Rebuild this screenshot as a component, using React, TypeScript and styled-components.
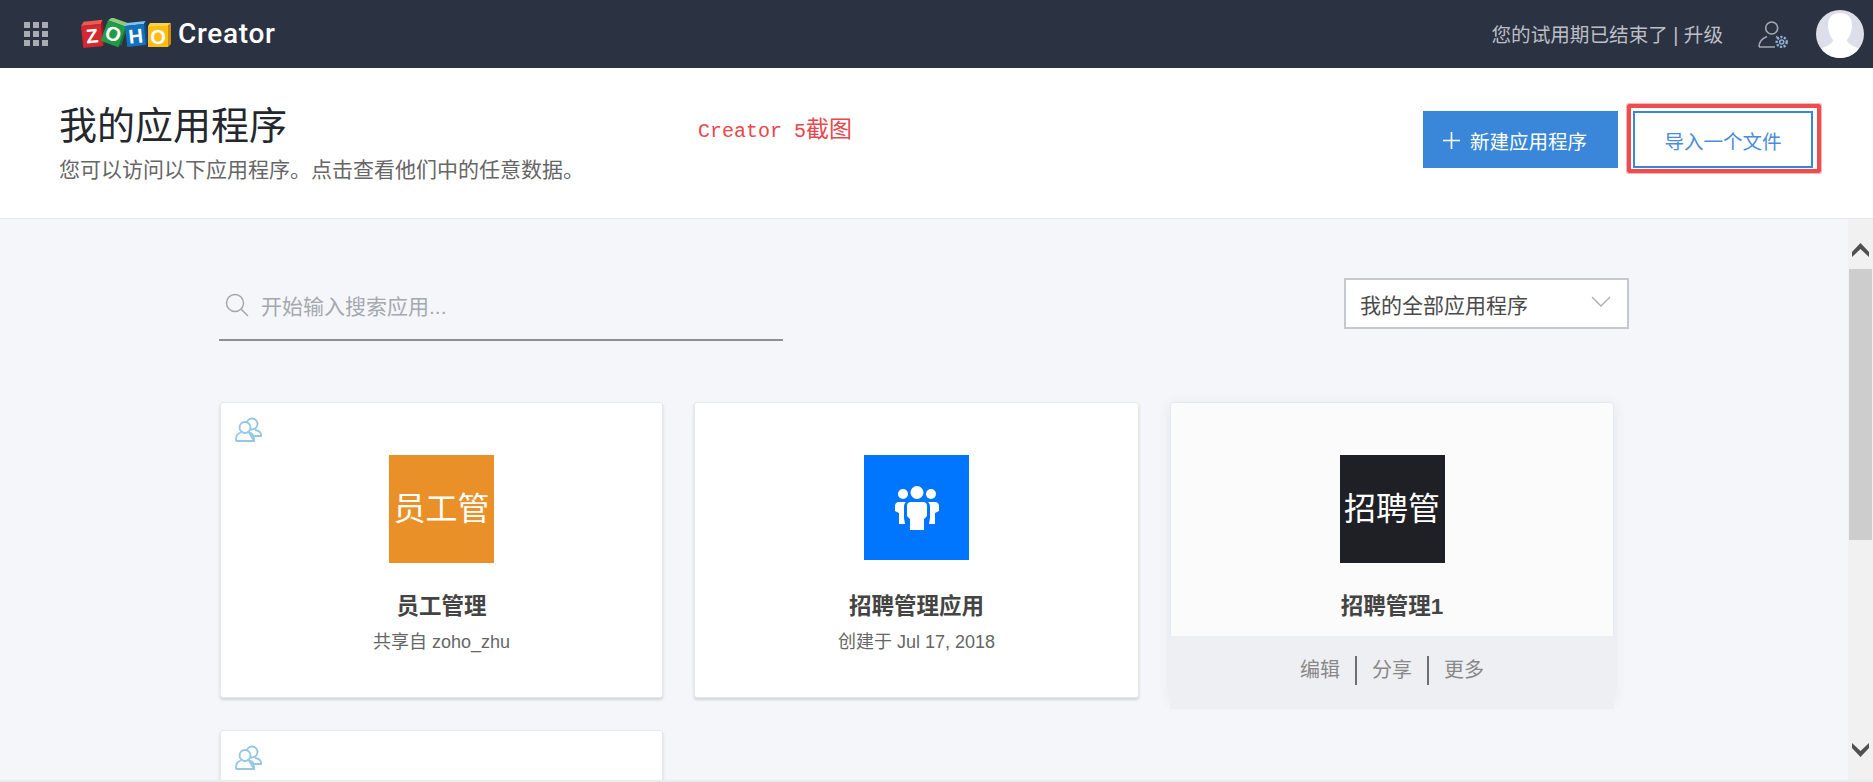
import React from "react";
import styled, { createGlobalStyle } from "styled-components";

const CJK = `"Liberation Sans", "Noto Sans CJK SC", sans-serif`;

const Global = createGlobalStyle`
  html, body { margin: 0; padding: 0; height: 100%; overflow: hidden; background: #f4f6fa; }
  * { box-sizing: border-box; }
  body { font-family: ${CJK}; }
`;

const Page = styled.div`
  width: 1873px; height: 782px; display: flex; flex-direction: column; overflow: hidden;
`;
const Header = styled.header`
  height: 68px; flex: none; background: #2b3242; display: flex; align-items: center; padding: 0 9px 0 24px;
`;
const Waffle = styled.div`
  display: grid; grid-template-columns: repeat(3, 6px); grid-auto-rows: 6px; gap: 3px; margin-right: 33px;
  i { background: #a9abb3; display: block; }
`;
const Brand = styled.div`
  display: flex; align-items: center; gap: 7px; flex: 1;
`;
const BrandName = styled.span`
  font-family: Roboto, sans-serif; font-weight: 500; font-size: 28px; letter-spacing: 0.7px; color: #fff; line-height: 1;
`;
const Trial = styled.span`
  font-size: 19.6px; color: #bcbfc6; margin-right: 35px; padding-bottom: 2px; white-space: pre;
`;
const UserGear = styled.svg`
  width: 30px; height: 28px; margin-right: 28px; display: block;
`;
const Avatar = styled.svg`
  width: 48px; height: 48px; display: block;
`;

const TopBar = styled.section`
  height: 151px; flex: none; background: #fff; border-bottom: 1px solid #e7e8eb; display: flex; align-items: flex-start; padding: 0 60px 0 59px; position: relative;
`;
const TitleBlock = styled.div`
  display: flex; flex-direction: column; padding-top: 35px; width: 639px; flex: none;
`;
const Title = styled.h1`
  margin: 0; font-weight: 400; font-size: 38px; line-height: 46px; color: #24272e;
`;
const Subtitle = styled.p`
  margin: 6px 0 0; font-size: 21px; line-height: 30px; color: #666;
`;
const Note = styled.span`
  margin-top: 47px; font-family: "Liberation Mono", "Noto Sans CJK SC", monospace; font-size: 20px; line-height: 32px; color: #e8474c; white-space: pre;
`;
const NoteCjk = styled.span`
  font-size: 23px;
`;
const Actions = styled.div`
  margin-left: auto; margin-top: 43px; display: flex; gap: 15px;
`;
const Button = styled.button<{ $primary?: boolean }>`
  height: 57px; padding: 2px 0 0; display: flex; align-items: center; gap: 10px;
  font-family: ${CJK}; font-size: 19.5px; cursor: pointer;
  justify-content: ${(p) => (p.$primary ? "flex-start" : "center")};
  padding-left: ${(p) => (p.$primary ? "18px" : "0")};
  width: ${(p) => (p.$primary ? "195px" : "180px")};
  background: ${(p) => (p.$primary ? "#3a87d9" : "#fff")};
  color: ${(p) => (p.$primary ? "#fff" : "#4a8cd8")};
  border: 2px solid #3a87d9;
  position: relative;
`;
const RedMark = styled.span`
  position: absolute; left: -8px; right: -10px; top: -9px; bottom: -7px;
  border: 4px solid #ee4c4f; border-radius: 2px; pointer-events: none;
  box-shadow: 0 0 0 1px rgba(238, 76, 79, 0.4);
`;

const Body = styled.div`
  flex: 1; min-height: 0; display: flex; border-bottom: 2px solid #ebecef;
`;
const Content = styled.main`
  flex: 1; min-width: 0; padding: 59px 0 0 219px; overflow: hidden;
`;
const Filters = styled.div`
  display: flex; justify-content: space-between; align-items: flex-start; width: 1410px; height: 124px;
`;
const Search = styled.div`
  width: 564px; height: 63px; border-bottom: 2px solid #8f8f8f; display: flex; align-items: center; gap: 12px; padding: 0 0 7px 6px;
`;
const SearchIcon = styled.svg`
  width: 24px; height: 24px; flex: none; display: block;
`;
const SearchText = styled.span`
  font-size: 21px; color: #a5a8ae;
`;
const Select = styled.div`
  width: 285px; height: 51px; background: #fff; border: 2px solid #c5c8cf; display: flex; align-items: center; justify-content: space-between; padding: 0 16px 0 14px;
  font-size: 21px; color: #4a4a4a;
`;
const Chevron = styled.svg`
  width: 20px; height: 11px; display: block; margin-top: -4px;
`;
const Grid = styled.div`
  display: grid; grid-template-columns: 443px 445px 444px; gap: 32px 31px; margin-left: 1px;
`;
const Card = styled.article<{ $active?: boolean }>`
  height: 296px; position: relative; border-radius: 3px; display: flex; flex-direction: column; align-items: center; padding-top: 52px;
  background: ${(p) => (p.$active ? "#fbfbfb" : "#fff")};
  border: 1px solid #e6e7ea;
  box-shadow: ${(p) => (p.$active ? "0 3px 14px rgba(40,50,70,.09)" : "0 2px 3px rgba(0,0,0,.14)")};
`;
const AppIcon = styled.div<{ $bg: string; $tall?: boolean }>`
  width: 105px; height: ${(p) => (p.$tall ? "108px" : "105px")}; margin-bottom: ${(p) => (p.$tall ? "0" : "3px")};
  padding-bottom: ${(p) => (p.$tall ? "6px" : "0")};
  background: ${(p) => p.$bg}; color: #fff; font-size: 32px; display: flex; align-items: center; justify-content: center; white-space: nowrap;
`;
const CardTitle = styled.h2`
  margin: 30px 0 0; font-size: 22.500px; line-height: 28px; font-weight: 700; color: #444;
`;
const CardSub = styled.p`
  margin: 9px 0 0; font-size: 18px; line-height: 24px; color: #666;
`;
const SharedIcon = styled.svg`
  position: absolute; left: 14px; top: 14px; width: 27px; height: 25px;
`;
const HoverBar = styled.div`
  position: absolute; left: -1px; right: -1px; bottom: -12px; height: 73px; background: #eeeff3; display: flex; justify-content: center; padding-top: 20px;
`;
const HoverAction = styled.span<{ $divided?: boolean }>`
  height: 29px; font-size: 20px; line-height: 29px; color: #888; padding: 0 15px;
  border-left: ${(p) => (p.$divided ? "2px solid #6f6f6f" : "none")};
`;

const Scrollbar = styled.div`
  width: 25px; flex: none; background: #f1f1f1; display: flex; flex-direction: column; align-items: center; padding-top: 24px;
`;
const ScrollArrow = styled.svg`
  width: 17px; height: 14px; flex: none; display: block;
`;
const ScrollThumb = styled.div`
  width: 23px; height: 271px; margin-top: 12px; background: #cdcdcd;
`;
const ScrollEnd = styled.div`
  margin-top: auto; margin-bottom: 23px; display: flex;
`;

const letter = { fontFamily: "Liberation Sans", fontWeight: 700, fill: "#fff", textAnchor: "middle" as const };

const Logo = () => (
  <svg width="90" height="32" viewBox="0 0 90 32" style={{ display: "block" }}>
    <g transform="rotate(-6 11 17)">
      <polygon points="1,7 4,3 23,3 21,7" fill="#ef5a50" />
      <polygon points="21,7 23,3 23,25 21,29" fill="#9c1a22" />
      <rect x="1" y="7" width="20" height="22" fill="#d42730" />
      <text x="11" y="25" fontSize="20" {...letter}>Z</text>
    </g>
    <g transform="rotate(20 33 15)">
      <polygon points="23,5 26,1 44,1 42,5" fill="#8ccb82" />
      <polygon points="42,5 44,1 44,23 42,27" fill="#1f6e33" />
      <rect x="23" y="5" width="19" height="22" fill="#239a48" />
      <text x="32.500" y="23" fontSize="20" {...letter}>O</text>
    </g>
    <g transform="rotate(-6 55 17)">
      <polygon points="45,7 47,4 66,4 64,7" fill="#7ec4ea" />
      <polygon points="64,7 66,4 66,25 64,28" fill="#0c4f8c" />
      <rect x="45" y="7" width="19" height="21" fill="#1272bd" />
      <text x="54.500" y="25" fontSize="20" {...letter}>H</text>
    </g>
    <polygon points="67,8 69,5 90,5 87,8" fill="#f7d34a" />
    <polygon points="87,8 90,5 90,26 87,29" fill="#c98c10" />
    <rect x="67" y="8" width="20" height="21" fill="#fbbd16" />
    <text x="77" y="26" fontSize="20" {...letter}>O</text>
  </svg>
);

const Shared = () => (
  <SharedIcon viewBox="0 0 27 25" fill="none" stroke="#93c7e4" strokeWidth="1.800">
    <circle cx="17" cy="7" r="5.500" />
    <path d="M20 13 c4 .5 6 2 6 5 v1 h-7" />
    <circle cx="10" cy="10.500" r="5.500" fill="#fff" />
    <path d="M1 24 v-2 c0-4 3-6 5-6.500 M14 15.500 c3 .7 5 3 5 6.500 v2 z M1 24 h18" />
  </SharedIcon>
);

const People = () => (
  <svg width="44" height="44" viewBox="0 0 44 44" fill="#fff">
    <circle cx="22" cy="6.500" r="6.500" />
    <circle cx="8" cy="8" r="5" />
    <circle cx="36" cy="8" r="5" />
    <path d="M16 16 h12 a4 4 0 0 1 4 4 v10 l-3 3 v11 h-14 v-11 l-3-3 v-10 a4 4 0 0 1 4-4 z" />
    <path d="M3 16 h8 c-1.500 1-2 3-2 5 v11 l1 6 h-6 v-11 l-4-2 v-6 a4 4 0 0 1 3-3 z" />
    <path d="M41 16 h-8 c1.500 1 2 3 2 5 v11 l-1 6 h6 v-11 l4-2 v-6 a4 4 0 0 0-3-3 z" />
  </svg>
);

export default function App() {
  return (
    <Page>
      <Global />
      <Header>
        <Waffle>{Array.from({ length: 9 }).map((_, i) => <i key={i} />)}</Waffle>
        <Brand>
          <Logo />
          <BrandName>Creator</BrandName>
        </Brand>
        <Trial>您的试用期已结束了 | 升级</Trial>
        <UserGear viewBox="0 0 30 28" fill="none" stroke="#a3a8b2" strokeWidth="1.600">
          <circle cx="13.700" cy="8" r="6" />
          <path d="M1 27 c0-6 4-9 8-10.500 M18 16.500 c.8 .4 1.500 .8 2 1.200 M1 27 h16" />
          <circle cx="23.700" cy="22" r="2" stroke="#8fb0d3" />
          <circle cx="23.700" cy="22" r="5" stroke="#8fb0d3" strokeWidth="2.400" strokeDasharray="2.200 1.400" />
        </UserGear>
        <Avatar viewBox="0 0 48 48">
          <defs>
            <clipPath id="avatarClip"><circle cx="24" cy="24" r="24" /></clipPath>
          </defs>
          <circle cx="24" cy="24" r="24" fill="#dcdfe9" />
          <g clipPath="url(#avatarClip)" fill="#fff">
            <path d="M12 15 C12 6 18 3 24 3 C30 3 36 6 36 15 C36 22 33 27 31 30 C31 34 38 36 44 39 V48 H4 V39 C10 36 17 34 17 30 C15 27 12 22 12 15 Z" />
          </g>
        </Avatar>
      </Header>

      <TopBar>
        <TitleBlock>
          <Title>我的应用程序</Title>
          <Subtitle>您可以访问以下应用程序。点击查看他们中的任意数据。</Subtitle>
        </TitleBlock>
        <Note>Creator 5<NoteCjk>截图</NoteCjk></Note>
        <Actions>
          <Button $primary>
            <svg width="17" height="17" viewBox="0 0 17 17" stroke="#fff" strokeWidth="1.600"><path d="M8.500 0 V17 M0 8.500 H17" /></svg>
            新建应用程序
          </Button>
          <Button>
            导入一个文件
            <RedMark />
          </Button>
        </Actions>
      </TopBar>

      <Body>
        <Content>
          <Filters>
            <Search>
              <SearchIcon viewBox="0 0 24 24" fill="none" stroke="#a3a6ab" strokeWidth="1.500">
                <circle cx="10" cy="10" r="8.500" />
                <path d="M16 16 L23 23" />
              </SearchIcon>
              <SearchText>开始输入搜索应用...</SearchText>
            </Search>
            <Select>
              我的全部应用程序
              <Chevron viewBox="0 0 20 11" fill="none" stroke="#a8abb0" strokeWidth="1.300"><path d="M1 1 L10 10 L19 1" /></Chevron>
            </Select>
          </Filters>
          <Grid>
            <Card>
              <Shared />
              <AppIcon $bg="#ea9029" $tall>员工管</AppIcon>
              <CardTitle>员工管理</CardTitle>
              <CardSub>共享自 zoho_zhu</CardSub>
            </Card>
            <Card>
              <AppIcon $bg="#0076ff"><People /></AppIcon>
              <CardTitle>招聘管理应用</CardTitle>
              <CardSub>创建于 Jul 17, 2018</CardSub>
            </Card>
            <Card $active>
              <AppIcon $bg="#1f2025" $tall>招聘管</AppIcon>
              <CardTitle>招聘管理1</CardTitle>
              <HoverBar>
                <HoverAction>编辑</HoverAction>
                <HoverAction $divided>分享</HoverAction>
                <HoverAction $divided>更多</HoverAction>
              </HoverBar>
            </Card>
            <Card>
              <Shared />
            </Card>
          </Grid>
        </Content>
        <Scrollbar>
          <ScrollArrow viewBox="0 0 17 14" fill="#505050"><path d="M8.500 0 L17 9 L17 14 L8.500 6 L0 14 L0 9 Z" /></ScrollArrow>
          <ScrollThumb />
          <ScrollEnd>
            <ScrollArrow viewBox="0 0 17 14" fill="#505050"><path d="M8.500 14 L17 5 L17 0 L8.500 8 L0 0 L0 5 Z" /></ScrollArrow>
          </ScrollEnd>
        </Scrollbar>
      </Body>
    </Page>
  );
}
